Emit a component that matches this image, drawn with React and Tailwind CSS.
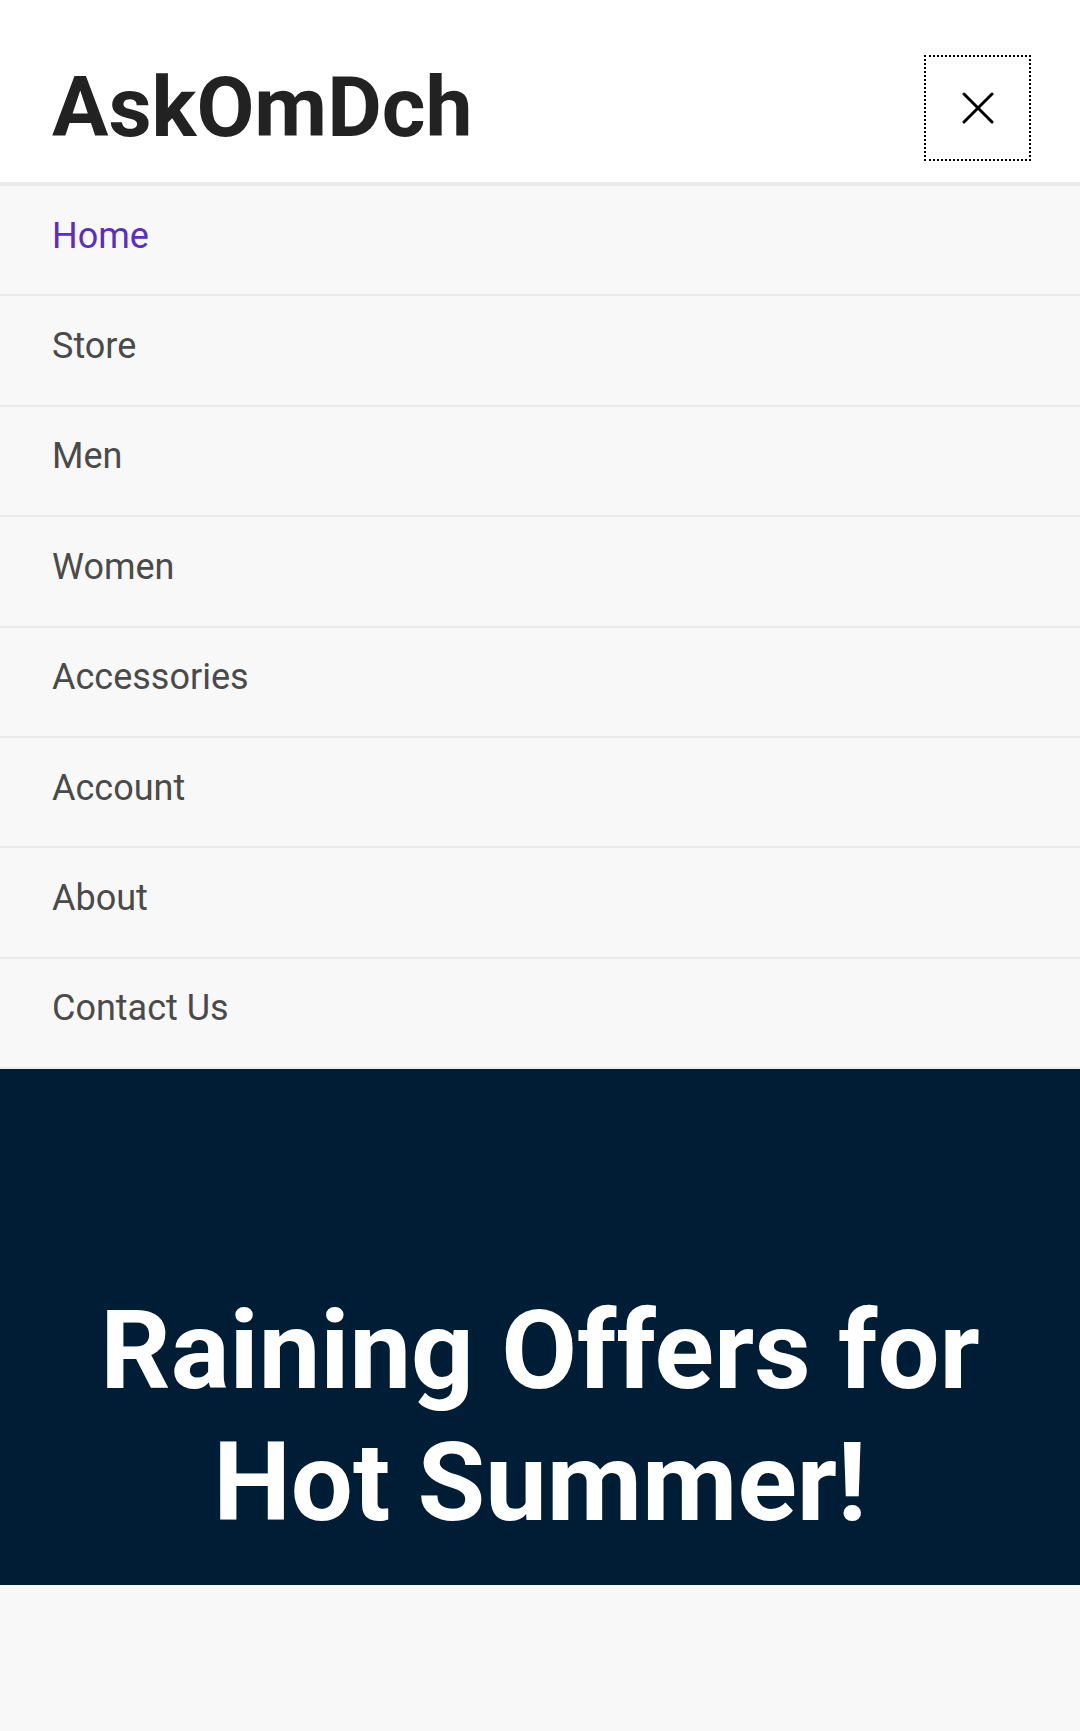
import React from "react";

const links = ["Home", "Store", "Men", "Women", "Accessories", "Account", "About", "Contact Us"];

const App = () => {
  return (
    <div className="min-h-[1731px] bg-[#f8f8f8] font-['Roboto',sans-serif]">
      <header className="flex h-[182px] items-center justify-between bg-white pl-[52px] pr-[49px] pt-[34px]">
        <h1 className="text-[84px] font-bold leading-[1.2] text-[#222222]">AskOmDch</h1>
        <button className="flex h-[106px] w-[107px] items-center justify-center border-2 border-dotted border-black">
          <svg width="32" height="32" viewBox="0 0 32 32" fill="none" stroke="#000" strokeWidth="3" strokeLinecap="round">
            <line x1="2" y1="2" x2="30" y2="30" />
            <line x1="30" y1="2" x2="2" y2="30" />
          </svg>
        </button>
      </header>

      <nav className="border-t-4 border-[#ebebeb]">
        <ul>
          {links.map((link, i) => (
            <li key={link} className="border-b-2 border-[#ebebeb]">
              <a
                href="#"
                className={
                  "flex h-[108.4px] items-center pb-[8px] pl-[52px] text-[36px] leading-[1.2] " +
                  (i === 0 ? "text-[#5b2ec2]" : "text-[#4a4a4a]")
                }
              >
                {link}
              </a>
            </li>
          ))}
        </ul>
      </nav>

      <section className="bg-[#001d36] pb-[36px] pt-[216px] text-center">
        <h2 className="text-[110px] font-bold leading-[1.2] text-white">
          Raining Offers for
          <br />
          Hot Summer!
        </h2>
      </section>
    </div>
  );
};

export default App;
